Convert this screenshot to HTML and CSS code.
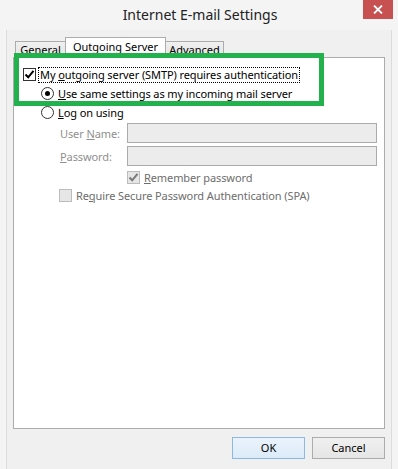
FILE: index.html
```html
<!DOCTYPE html>
<html>
<head>
<meta charset="utf-8">
<link rel="stylesheet" href="styles.css">
</head>
<body>
<div class="window">
  <div class="titlebar">
    <span class="title">Internet E-mail Settings</span>
    <div class="close">
      <svg width="10" height="9" viewBox="0 0 10 9"><path d="M1 0.5 L9 8.5 M9 0.5 L1 8.5" stroke="#fff" stroke-width="1.8" fill="none"/></svg>
    </div>
  </div>
  <div class="client">
    <div class="tabs">
      <div class="tab tab-general">General</div>
      <div class="tab tab-active">Outgoing Server</div>
      <div class="tab tab-advanced">Advanced</div>
    </div>
    <div class="panel">
      <div class="row r1">
        <span class="chk">
          <svg width="11" height="11" viewBox="0 0 11 11"><path d="M1.5 5.5 L4.2 8.3 L9.5 1.8" stroke="#000" stroke-width="2" fill="none"/></svg>
        </span>
        <span class="focus">My <u>o</u>utgoing server (SMTP) requires authentication</span>
      </div>
      <div class="row r2">
        <span class="radio on"><span class="dot"></span></span>
        <span class="lbl"><u>U</u>se same settings as my incoming mail server</span>
      </div>
      <div class="row r3">
        <span class="radio"></span>
        <span class="lbl"><u>L</u>og on using</span>
      </div>
      <div class="row field r4">
        <span class="flabel">User <u>N</u>ame:</span>
        <span class="input"></span>
      </div>
      <div class="row field r5">
        <span class="flabel"><u>P</u>assword:</span>
        <span class="input"></span>
      </div>
      <div class="row r6">
        <span class="chk disabled">
          <svg width="11" height="11" viewBox="0 0 11 11"><path d="M1.5 5.5 L4.2 8.3 L9.5 1.8" stroke="#7a7a7a" stroke-width="2" fill="none"/></svg>
        </span>
        <span class="lbl dis"><u>R</u>emember password</span>
      </div>
      <div class="row r7">
        <span class="chk disabled"></span>
        <span class="lbl dis">Re<u>q</u>uire Secure Password Authentication (SPA)</span>
      </div>
    </div>
    <div class="buttons">
      <div class="btn btn-default">OK</div>
      <div class="btn">Cancel</div>
    </div>
  </div>
  <div class="annot"></div>
</div>
</body>
</html>
```

FILE: styles.css
```css
html, body {
  margin: 0;
  padding: 0;
  background: #f4f4f4;
}
.window {
  position: relative;
  width: 398px;
  height: 469px;
  background: #f4f4f4;
  font-family: "Noto Sans", "Open Sans", sans-serif;
  font-size: 11px;
  letter-spacing: -0.1px;
  color: #000;
  overflow: hidden;
}
.titlebar {
  position: relative;
  height: 30px;
  text-align: center;
}
.title {
  display: inline-block;
  font-size: 14px;
  letter-spacing: 0;
  line-height: 30px;
  color: #222;
  padding-left: 2px;
}
.close {
  position: absolute;
  top: 0;
  left: 363px;
  width: 30px;
  height: 19px;
  background: #c75050;
  display: flex;
  align-items: center;
  justify-content: center;
}
.close svg { display: block; }
.client {
  margin-left: 6px;
  width: 372px;
  height: 433px;
  padding: 7px 6px 0 6px;
  border-left: 1px solid #dcdcdc;
  border-right: 1px solid #dcdcdc;
  border-bottom: 1px solid #dcdcdc;
  background: #f0f0f0;
}
.tabs {
  display: flex;
  align-items: flex-end;
  height: 20px;
  padding-left: 2px;
  position: relative;
  z-index: 2;
}
.tab {
  box-sizing: border-box;
  height: 16px;
  border: 1px solid #acacac;
  border-bottom: none;
  background: linear-gradient(#f0f0f0, #e5e5e5);
  text-align: center;
  line-height: 15px;
  white-space: nowrap;
  letter-spacing: 0;
}
.tab-general { width: 51px; }
.tab-active {
  width: 101px;
  height: 21px;
  margin-left: -1px;
  margin-bottom: -1px;
  background: #fff;
  line-height: 17px;
  position: relative;
  z-index: 3;
}
.tab-advanced { width: 59px; margin-left: -1px; }
.panel {
  box-sizing: border-box;
  height: 372px;
  border: 1px solid #acacac;
  background: #fff;
  padding: 7px 7px 0 9px;
  position: relative;
  z-index: 1;
}
.row {
  display: flex;
  align-items: center;
  height: 19px;
  white-space: nowrap;
}
.chk {
  box-sizing: border-box;
  width: 13px;
  height: 13px;
  border: 1px solid #333;
  background: #fff;
  display: flex;
  align-items: center;
  justify-content: center;
  flex: none;
}
.chk svg { display: block; }
.chk.disabled {
  border-color: #bcbcbc;
  background: #e6e6e6;
}
.focus {
  margin-left: 2px;
  padding: 0 1px;
  border: 1px dotted #000;
  line-height: 14px;
}
.radio {
  box-sizing: border-box;
  width: 13px;
  height: 13px;
  border: 1px solid #333;
  border-radius: 50%;
  background: #fff;
  display: flex;
  align-items: center;
  justify-content: center;
  flex: none;
}
.radio .dot {
  width: 5px;
  height: 5px;
  border-radius: 50%;
  background: #000;
}
.lbl { margin-left: 4px; }
.r2, .r3 { padding-left: 18px; }
.r4 { margin-top: 1px; }
.r5 { margin-top: 3px; }
.field {
  height: 20px;
  padding-left: 37px;
}
.flabel {
  width: 67px;
  color: #8f8f8f;
  flex: none;
}
.input {
  box-sizing: border-box;
  width: 250px;
  height: 20px;
  border: 1px solid #ababab;
  background: #ececec;
}
.r6 {
  margin-top: 3px;
  height: 17px;
  padding-left: 104px;
}
.r7 { padding-left: 36px; }
.dis { color: #6d6d6d; }
.buttons {
  display: flex;
  justify-content: flex-end;
  gap: 7px;
  margin-top: 8px;
}
.btn {
  box-sizing: border-box;
  width: 73px;
  height: 22px;
  border: 1px solid #acacac;
  background: linear-gradient(#f0f0f0, #e5e5e5);
  text-align: center;
  line-height: 20px;
  letter-spacing: 0;
}
.btn-default {
  border-color: #8fb8e0;
  background: linear-gradient(#eaf3fc, #dcebf9);
}
.annot {
  position: absolute;
  left: 14px;
  top: 53px;
  width: 300px;
  height: 43px;
  border: 5px solid #22b14c;
  z-index: 5;
}
```
